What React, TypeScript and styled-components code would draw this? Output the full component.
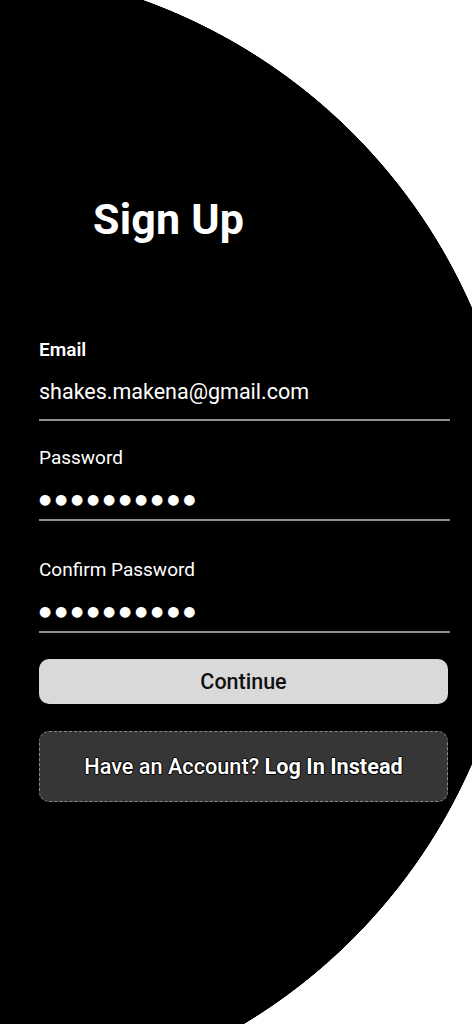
import * as React from "react";
import styled, {createGlobalStyle} from "styled-components";

const GlobalStyle = createGlobalStyle`
    html, body {
        margin: 0;
        padding: 0;
        background: #fff;
        font-family: Roboto, "Liberation Sans", Arial, sans-serif;
    }
`;

const Page = styled.div`
    width: 472px;
    min-height: 1024px;
    box-sizing: border-box;
    padding: 194px 22px 0 39px;
    background: radial-gradient(circle 570px at -50px 536px, #000 99.9%, #fff 100%);
    color: #fff;
`;

const Title = styled.h1`
    margin: 0 0 0 54px;
    font-size: 43px;
    line-height: 51px;
    font-weight: 700;
    letter-spacing: 0.2px;
`;

const Form = styled.form`
    display: flex;
    flex-direction: column;
    margin-top: 93.5px;
`;

const Field = styled.div<{ $top: number }>`
    display: flex;
    flex-direction: column;
    margin-top: ${p => p.$top}px;
`;

const Label = styled.label<{ $bold?: boolean }>`
    font-size: 19px;
    line-height: 22px;
    font-weight: ${p => (p.$bold ? 600 : 400)};
`;

const Value = styled.div<{ $pad: number }>`
    margin-top: 18px;
    padding-bottom: ${p => p.$pad}px;
    border-bottom: 2px solid #8e8e8e;
    font-size: 21.5px;
    line-height: 26px;
`;

const Dots = styled(Value)`
    margin-top: 17.5px;
    font-family: "DejaVu Sans", sans-serif;
    font-size: 14px;
    letter-spacing: 3.8px;
`;

const PrimaryButton = styled.button`
    margin-top: 26px;
    width: 409px;
    height: 45px;
    border: none;
    border-radius: 10px;
    background: #d9d9d9;
    color: #111;
    font-family: Roboto, sans-serif;
    font-size: 21.5px;
    font-weight: 500;
    cursor: pointer;
`;

const GhostButton = styled.button`
    margin-top: 27px;
    width: 409px;
    height: 71px;
    border: 1px dashed #8a8a8a;
    border-radius: 10px;
    background: #363636;
    color: #fff;
    font-family: Roboto, sans-serif;
    font-size: 21.7px;
    font-weight: 500;
    text-shadow: -1px 0 #000, 1px 0 #000, 0 -1px #000, 0 1px #000;
    cursor: pointer;

    strong {
        font-weight: 700;
    }
`;

const App = () => {
    return (
        <Page>
            <GlobalStyle/>
            <Title>Sign Up</Title>
            <Form onSubmit={e => e.preventDefault()}>
                <Field $top={0}>
                    <Label $bold>Email</Label>
                    <Value $pad={14}>shakes.makena@gmail.com</Value>
                </Field>
                <Field $top={26}>
                    <Label>Password</Label>
                    <Dots $pad={6.7}>●●●●●●●●●●</Dots>
                </Field>
                <Field $top={38}>
                    <Label>Confirm Password</Label>
                    <Dots $pad={7}>●●●●●●●●●●</Dots>
                </Field>
                <PrimaryButton type='submit'>Continue</PrimaryButton>
                <GhostButton type='button'>Have an Account? <strong>Log In Instead</strong></GhostButton>
            </Form>
        </Page>
    )
};

export default App;
